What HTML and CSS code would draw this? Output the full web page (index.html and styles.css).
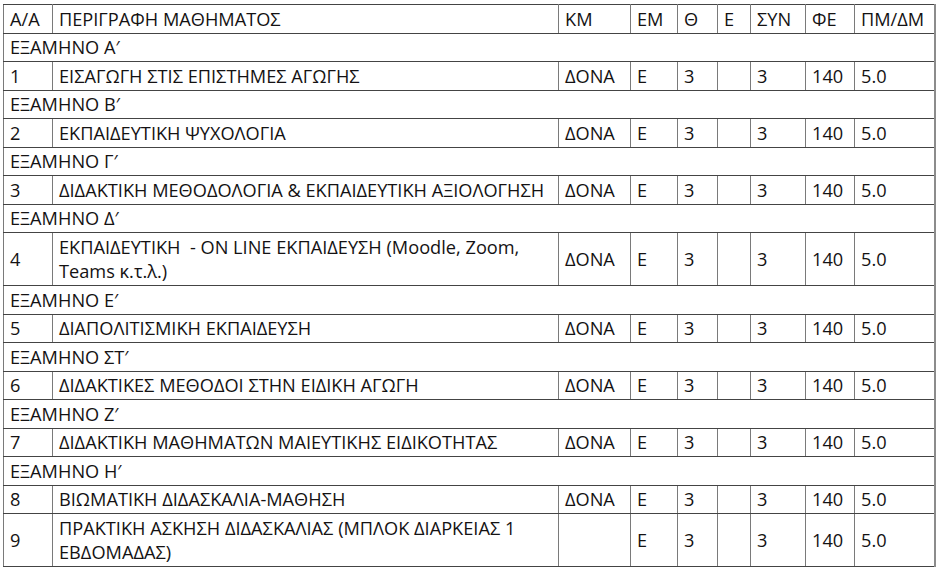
FILE: index.html
```html
<!DOCTYPE html>
<html lang="el">
<head>
<meta charset="utf-8">
<title>Μαθήματα</title>
<link rel="stylesheet" href="styles.css">
</head>
<body>
<table class="courses">
  <colgroup>
    <col class="c-aa"><col class="c-desc"><col class="c-km"><col class="c-em"><col class="c-th"><col class="c-e"><col class="c-syn"><col class="c-fe"><col class="c-pm">
  </colgroup>
  <tr><td>Α/Α</td><td>ΠΕΡΙΓΡΑΦΗ ΜΑΘΗΜΑΤΟΣ</td><td>ΚΜ</td><td>ΕΜ</td><td>Θ</td><td>Ε</td><td>ΣΥΝ</td><td>ΦΕ</td><td>ΠΜ/ΔΜ</td></tr>
  <tr class="sem"><td colspan="9">ΕΞΑΜΗΝΟ Α′</td></tr>
  <tr><td>1</td><td>ΕΙΣΑΓΩΓΗ ΣΤΙΣ ΕΠΙΣΤΗΜΕΣ ΑΓΩΓΗΣ</td><td>ΔΟΝΑ</td><td>Ε</td><td>3</td><td></td><td>3</td><td>140</td><td>5.0</td></tr>
  <tr class="sem"><td colspan="9">ΕΞΑΜΗΝΟ Β′</td></tr>
  <tr><td>2</td><td>ΕΚΠΑΙΔΕΥΤΙΚΗ ΨΥΧΟΛΟΓΙΑ</td><td>ΔΟΝΑ</td><td>Ε</td><td>3</td><td></td><td>3</td><td>140</td><td>5.0</td></tr>
  <tr class="sem"><td colspan="9">ΕΞΑΜΗΝΟ Γ′</td></tr>
  <tr><td>3</td><td>ΔΙΔΑΚΤΙΚΗ ΜΕΘΟΔΟΛΟΓΙΑ &amp; ΕΚΠΑΙΔΕΥΤΙΚΗ ΑΞΙΟΛΟΓΗΣΗ</td><td>ΔΟΝΑ</td><td>Ε</td><td>3</td><td></td><td>3</td><td>140</td><td>5.0</td></tr>
  <tr class="sem"><td colspan="9">ΕΞΑΜΗΝΟ Δ′</td></tr>
  <tr><td>4</td><td>ΕΚΠΑΙΔΕΥΤΙΚΗ &nbsp;- ON LINE ΕΚΠΑΙΔΕΥΣΗ (Moodle, Zoom,<br>Teams κ.τ.λ.)</td><td>ΔΟΝΑ</td><td>Ε</td><td>3</td><td></td><td>3</td><td>140</td><td>5.0</td></tr>
  <tr class="sem"><td colspan="9">ΕΞΑΜΗΝΟ Ε′</td></tr>
  <tr><td>5</td><td>ΔΙΑΠΟΛΙΤΙΣΜΙΚΗ ΕΚΠΑΙΔΕΥΣΗ</td><td>ΔΟΝΑ</td><td>Ε</td><td>3</td><td></td><td>3</td><td>140</td><td>5.0</td></tr>
  <tr class="sem"><td colspan="9">ΕΞΑΜΗΝΟ ΣΤ′</td></tr>
  <tr><td>6</td><td>ΔΙΔΑΚΤΙΚΕΣ ΜΕΘΟΔΟΙ ΣΤΗΝ ΕΙΔΙΚΗ ΑΓΩΓΗ</td><td>ΔΟΝΑ</td><td>Ε</td><td>3</td><td></td><td>3</td><td>140</td><td>5.0</td></tr>
  <tr class="sem"><td colspan="9">ΕΞΑΜΗΝΟ Ζ′</td></tr>
  <tr><td>7</td><td>ΔΙΔΑΚΤΙΚΗ ΜΑΘΗΜΑΤΩΝ ΜΑΙΕΥΤΙΚΗΣ ΕΙΔΙΚΟΤΗΤΑΣ</td><td>ΔΟΝΑ</td><td>Ε</td><td>3</td><td></td><td>3</td><td>140</td><td>5.0</td></tr>
  <tr class="sem"><td colspan="9">ΕΞΑΜΗΝΟ Η′</td></tr>
  <tr><td>8</td><td>ΒΙΩΜΑΤΙΚΗ ΔΙΔΑΣΚΑΛΙΑ-ΜΑΘΗΣΗ</td><td>ΔΟΝΑ</td><td>Ε</td><td>3</td><td></td><td>3</td><td>140</td><td>5.0</td></tr>
  <tr><td>9</td><td>ΠΡΑΚΤΙΚΗ ΑΣΚΗΣΗ ΔΙΔΑΣΚΑΛΙΑΣ (ΜΠΛΟΚ ΔΙΑΡΚΕΙΑΣ 1<br>ΕΒΔΟΜΑΔΑΣ)</td><td></td><td>Ε</td><td>3</td><td></td><td>3</td><td>140</td><td>5.0</td></tr>
</table>
</body>
</html>
```

FILE: styles.css
```css
html, body {
  margin: 0;
  padding: 0;
  background: #ffffff;
}

body {
  padding: 4px 0 0 3px;
  font-family: "Open Sans", "Noto Sans", sans-serif;
  color: #141213;
}

.courses {
  border-collapse: collapse;
  table-layout: fixed;
  width: 931px;
  font-size: 18.2px;
  letter-spacing: 0;
}

.courses td {
  border-top: 1px solid #444444;
  border-bottom: 1px solid #444444;
  border-left: 1px solid #7a7a7a;
  border-right: 1px solid #7a7a7a;
  padding: 1.5px 6px;
  line-height: 24.5px;
  white-space: nowrap;
  vertical-align: middle;
  text-align: left;
}

.courses tr > td:last-child {
  border-right: 2px solid #8c8c8c;
}

.c-aa { width: 49px; }
.c-desc { width: 506px; }
.c-km { width: 72px; }
.c-em { width: 47px; }
.c-th { width: 40px; }
.c-e { width: 33px; }
.c-syn { width: 55px; }
.c-fe { width: 49px; }
.c-pm { width: 80px; }
```
